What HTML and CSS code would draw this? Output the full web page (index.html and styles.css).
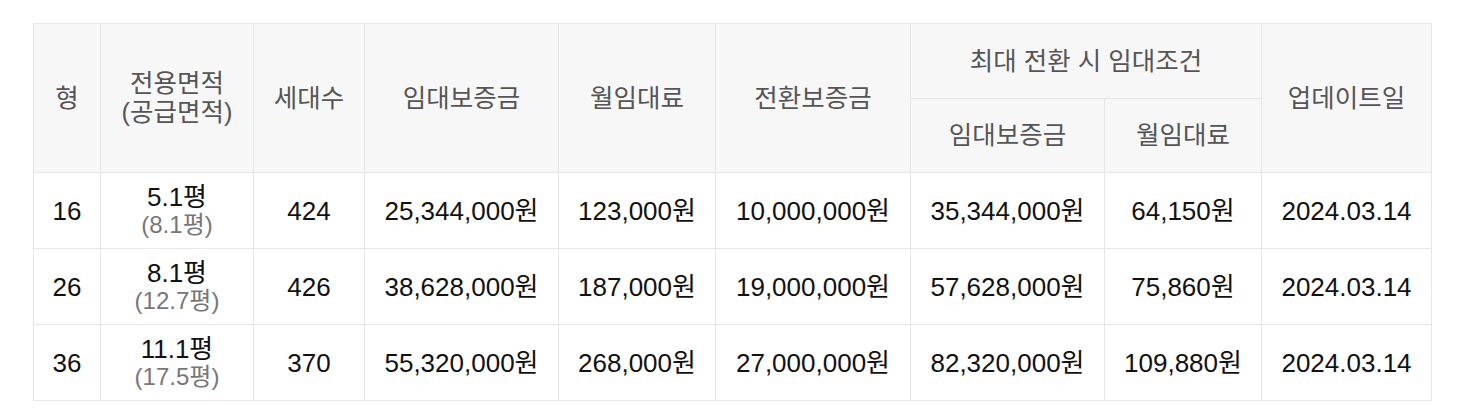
FILE: index.html
```html
<!DOCTYPE html>
<html lang="ko">
<head>
<meta charset="utf-8">
<title>임대조건</title>
<link rel="stylesheet" href="styles.css">
</head>
<body>
<div class="wrap">
<table class="rent">
  <colgroup>
    <col class="c-type">
    <col class="c-area">
    <col class="c-units">
    <col class="c-dep">
    <col class="c-month">
    <col class="c-conv">
    <col class="c-dep2">
    <col class="c-month2">
    <col class="c-date">
  </colgroup>
  <thead>
    <tr class="h1">
      <th rowspan="2">형</th>
      <th rowspan="2">전용면적<br>(공급면적)</th>
      <th rowspan="2">세대수</th>
      <th rowspan="2">임대보증금</th>
      <th rowspan="2">월임대료</th>
      <th rowspan="2">전환보증금</th>
      <th colspan="2">최대 전환 시 임대조건</th>
      <th rowspan="2">업데이트일</th>
    </tr>
    <tr class="h2">
      <th>임대보증금</th>
      <th>월임대료</th>
    </tr>
  </thead>
  <tbody>
    <tr>
      <td>16</td>
      <td><span class="main">5.1평</span><span class="sub">(8.1평)</span></td>
      <td>424</td>
      <td>25,344,000원</td>
      <td>123,000원</td>
      <td>10,000,000원</td>
      <td>35,344,000원</td>
      <td>64,150원</td>
      <td>2024.03.14</td>
    </tr>
    <tr>
      <td>26</td>
      <td><span class="main">8.1평</span><span class="sub">(12.7평)</span></td>
      <td>426</td>
      <td>38,628,000원</td>
      <td>187,000원</td>
      <td>19,000,000원</td>
      <td>57,628,000원</td>
      <td>75,860원</td>
      <td>2024.03.14</td>
    </tr>
    <tr>
      <td>36</td>
      <td><span class="main">11.1평</span><span class="sub">(17.5평)</span></td>
      <td>370</td>
      <td>55,320,000원</td>
      <td>268,000원</td>
      <td>27,000,000원</td>
      <td>82,320,000원</td>
      <td>109,880원</td>
      <td>2024.03.14</td>
    </tr>
  </tbody>
</table>
</div>
</body>
</html>
```

FILE: styles.css
```css
html, body {
  margin: 0;
  padding: 0;
  background: #ffffff;
}

body {
  font-family: "Liberation Sans", "Noto Sans CJK KR", sans-serif;
  color: #111111;
}

.wrap {
  padding: 23px 32px 0 33px;
}

.rent {
  width: 1398px;
  border-collapse: collapse;
  table-layout: fixed;
  border-top: 1px solid #cfcfcf;
}

.c-type { width: 67px; }
.c-area { width: 153px; }
.c-units { width: 111px; }
.c-dep { width: 194px; }
.c-month { width: 157px; }
.c-conv { width: 195px; }
.c-dep2 { width: 194px; }
.c-month2 { width: 157px; }
.c-date { width: 170px; }

.rent th,
.rent td {
  border: 1px solid #e6e6e6;
  text-align: center;
  vertical-align: middle;
  padding: 0;
}

.rent th {
  background: #f7f7f7;
  color: #555555;
  font-weight: normal;
  font-size: 25.5px;
  line-height: 29px;
}

.rent .h1 th {
  height: 74px;
}

.rent .h2 th {
  height: 73px;
}

.rent td {
  height: 75px;
  font-size: 26px;
  line-height: 28px;
  color: #111111;
}

.rent .main,
.rent .sub {
  display: block;
}

.rent .sub {
  color: #777777;
  font-size: 24px;
  line-height: 28px;
}
```
